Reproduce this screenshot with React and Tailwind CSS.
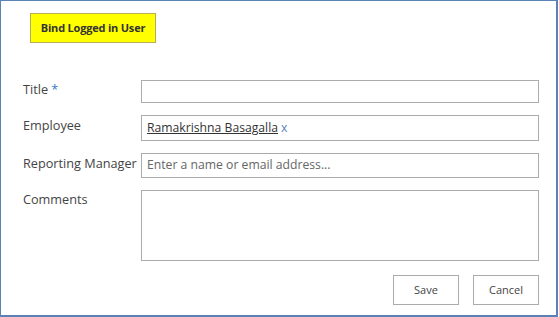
export default function App() {
  const font = "font-['Segoe_UI','Open_Sans',sans-serif]";
  const field = 'border border-[#ababab] bg-white';

  return (
    <div className={`w-[558px] h-[317px] bg-white border-t border-l border-r-2 border-b-2 border-[#5b82b5] text-[#444] ${font}`}>
      <div className="pl-[29px] pt-[12px]">
        <button className="w-[126px] h-[30px] bg-[#ffff00] border border-[#b8ad5c] text-[11px] font-bold text-[#333] tracking-[-0.2px]">
          Bind Logged in User
        </button>
      </div>

      <div className="ml-[22px] mt-[37px] w-[516px] flex flex-col gap-[12px] text-[12.7px]">
        <div className="grid grid-cols-[118px_1fr] items-start">
          <label className="leading-[18px]">
            Title <span className="text-[#3a7bc8]">*</span>
          </label>
          <div className={`h-[23px] ${field}`} />
        </div>

        <div className="grid grid-cols-[118px_1fr] items-start">
          <label className="leading-[18px] pt-[1px]">Employee</label>
          <div className={`h-[26px] flex items-center px-[5px] text-[12.2px] ${field}`}>
            <span className="underline text-[#333]">Ramakrishna Basagalla</span>
            <span className="ml-[3px] text-[#5b82b5]">x</span>
          </div>
        </div>

        <div className="grid grid-cols-[118px_1fr] items-start">
          <label className="leading-[18px] pt-[1px] whitespace-nowrap">Reporting Manager</label>
          <div className={`h-[25px] flex items-center px-[5px] text-[12.2px] text-[#666] ${field}`}>
            Enter a name or email address...
          </div>
        </div>

        <div className="grid grid-cols-[118px_1fr] items-start">
          <label className="leading-[18px]">Comments</label>
          <div className={`h-[71px] ${field}`} />
        </div>

        <div className="flex justify-end gap-[14px] mt-[2px]">
          <button className="w-[66px] h-[30px] border border-[#ababab] bg-white text-[11px] text-[#444]">Save</button>
          <button className="w-[66px] h-[30px] border border-[#ababab] bg-white text-[11px] text-[#444]">Cancel</button>
        </div>
      </div>
    </div>
  );
}
